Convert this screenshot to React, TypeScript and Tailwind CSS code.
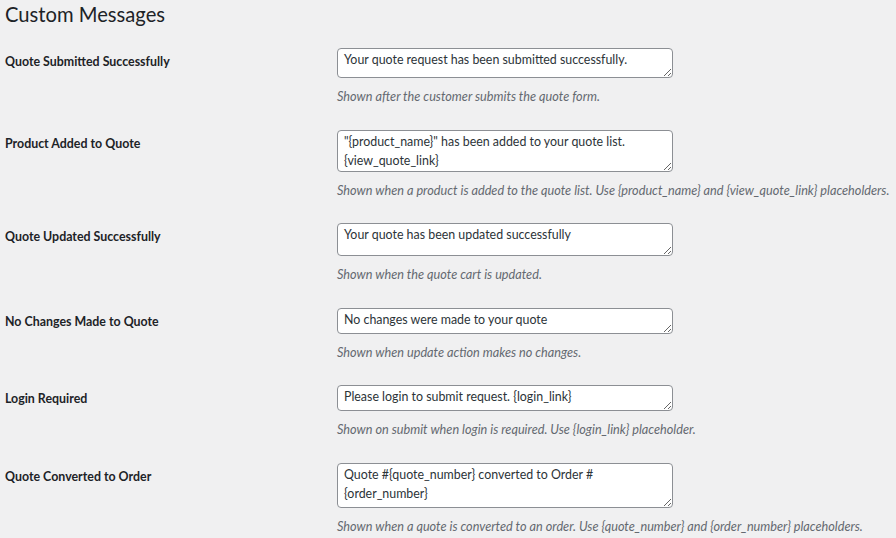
const messages = [
  {
    label: 'Quote Submitted Successfully',
    value: 'Your quote request has been submitted successfully.',
    height: 'h-[30px]',
    desc: 'Shown after the customer submits the quote form.',
  },
  {
    label: 'Product Added to Quote',
    value: '"{product_name}" has been added to your quote list. {view_quote_link}',
    height: 'h-[42px]',
    desc: 'Shown when a product is added to the quote list. Use {product_name} and {view_quote_link} placeholders.',
  },
  {
    label: 'Quote Updated Successfully',
    value: 'Your quote has been updated successfully',
    height: 'h-[33px]',
    desc: 'Shown when the quote cart is updated.',
  },
  {
    label: 'No Changes Made to Quote',
    value: 'No changes were made to your quote',
    height: 'h-[26px]',
    desc: 'Shown when update action makes no changes.',
  },
  {
    label: 'Login Required',
    value: 'Please login to submit request. {login_link}',
    height: 'h-[26px]',
    desc: 'Shown on submit when login is required. Use {login_link} placeholder.',
  },
  {
    label: 'Quote Converted to Order',
    value: 'Quote #{quote_number} converted to Order # {order_number}',
    height: 'h-[45px]',
    desc: 'Shown when a quote is converted to an order. Use {quote_number} and {order_number} placeholders.',
  },
];

export default function App() {
  return (
    <div className="min-h-screen bg-[#f0f0f1] pl-[5px] font-['Lato',sans-serif] text-[#1d2327]">
      <h2 className="h-[33px] pt-[1px] text-[20.2px] leading-[26px] font-normal">Custom Messages</h2>

      {messages.map((m) => (
        <div key={m.label} className="flex pt-[15px] pb-[8.5px]">
          <div className="w-[332px] shrink-0 pt-[5px] text-[12.4px] leading-[18px] font-bold">
            {m.label}
          </div>
          <div className="flex flex-col">
            <textarea
              defaultValue={m.value}
              className={`w-[336px] ${m.height} block overflow-hidden rounded-[4px] border border-[#8c8f94] bg-white px-[6px] py-[1px] text-[12.4px] leading-[19px] text-[#2c3338] outline-none`}
            />
            <p className="mt-[9px] text-[12.7px] leading-[19px] italic text-[#646970] whitespace-nowrap">{m.desc}</p>
          </div>
        </div>
      ))}
    </div>
  );
}
